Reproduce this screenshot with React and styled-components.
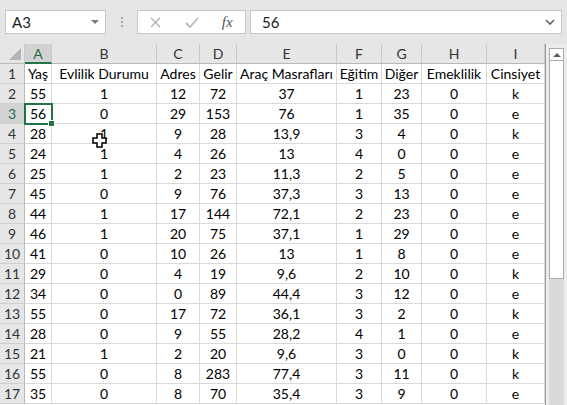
import React from "react";
import styled, { createGlobalStyle } from "styled-components";

const Global = createGlobalStyle`
  html, body { margin: 0; padding: 0; }
  body { width: 567px; height: 405px; overflow: hidden; background: #e6e6e6; font-family: "Lato", "Noto Sans", sans-serif; }
  #root { width: 567px; height: 405px; overflow: hidden; }
`;

const Page = styled.div`
  width: 567px;
  height: 405px;
  display: flex;
  flex-direction: column;
  overflow: hidden;
  background: #e6e6e6;
`;

const FormulaBar = styled.div`
  height: 44px;
  flex: none;
  display: flex;
  align-items: flex-start;
  padding: 10px 5px 0 5px;
  box-sizing: border-box;
`;

const Box = styled.div`
  height: 24px;
  box-sizing: border-box;
  background: #fff;
  border: 1px solid #c6c6c6;
  display: flex;
  align-items: center;
  width: ${(p) => p.$w}px;
  flex: ${(p) => (p.$grow ? 1 : "none")};
  margin-left: ${(p) => p.$ml || 0}px;
  padding: 0 ${(p) => p.$pr || 0}px 0 ${(p) => p.$pl || 0}px;
  font-size: 15px;
  color: #222;
`;

const BoxText = styled.span`
  flex: 1;
`;

const DropTri = styled.span`
  width: 0;
  height: 0;
  border-left: 4px solid transparent;
  border-right: 4px solid transparent;
  border-top: 4px solid #7a7a7a;
`;

const Dots = styled.div`
  width: 31px;
  flex: none;
  height: 24px;
  display: flex;
  flex-direction: column;
  align-items: center;
  justify-content: center;
  gap: 2px;
`;

const Dot = styled.span`
  width: 2px;
  height: 2px;
  background: #a8a8a8;
`;

const FxIcon = styled.span`
  width: 36px;
  display: flex;
  justify-content: center;
  align-items: center;
  color: ${(p) => p.$c};
  font-family: "Liberation Serif", serif;
  font-style: italic;
  font-size: 15px;
`;

const Main = styled.div`
  flex: 1;
  display: flex;
  min-height: 0;
`;

const Grid = styled.div`
  display: grid;
  grid-template-columns: 25px 27px 105px 43px 37px 100px 45px 40px 65px 58px;
  grid-auto-rows: 20px;
  background: #fff;
  align-content: start;
  border-right: 1px solid #9c9c9c;
  width: 546px;
  box-sizing: border-box;
  height: 100%;
`;

const Corner = styled.div`
  background: #e6e6e6;
  border-right: 1px solid #c8c8c8;
  border-bottom: 1px solid #b8b8b8;
  box-sizing: border-box;
  display: flex;
  align-items: flex-end;
  justify-content: flex-end;
  padding: 0 3px 3px 0;
`;

const CornerTri = styled.span`
  width: 0;
  height: 0;
  border-left: 12px solid transparent;
  border-bottom: 12px solid #b4b4b4;
`;

const ColHead = styled.div`
  background: ${(p) => (p.$sel ? "#d2d2d2" : "#e6e6e6")};
  color: ${(p) => (p.$sel ? "#1e6b41" : "#333")};
  border-right: 1px solid #c8c8c8;
  border-bottom: ${(p) => (p.$sel ? "2px solid #217346" : "1px solid #b8b8b8")};
  box-sizing: border-box;
  display: flex;
  align-items: center;
  justify-content: center;
  font-size: 14px;
`;

const RowHead = styled.div`
  background: ${(p) => (p.$sel ? "#d2d2d2" : "#e6e6e6")};
  color: ${(p) => (p.$sel ? "#1e6b41" : "#333")};
  border-right: 1px solid #b8b8b8;
  border-bottom: 1px solid #cfcfcf;
  box-sizing: border-box;
  display: flex;
  align-items: center;
  justify-content: center;
  font-size: 14px;
`;

const Cell = styled.div`
  position: relative;
  border-right: 1px solid #d9d9d9;
  border-bottom: 1px solid #d9d9d9;
  box-sizing: border-box;
  display: flex;
  align-items: center;
  justify-content: center;
  font-size: 14px;
  color: #000;
  white-space: nowrap;
  ${(p) =>
    p.$sel &&
    `
    outline: 2px solid #217346;
    outline-offset: -1px;
    z-index: 2;
    &::after {
      content: "";
      position: absolute;
      right: -4px;
      bottom: -4px;
      width: 5px;
      height: 5px;
      background: #217346;
      border: 1px solid #fff;
    }
  `}
`;

const Scroll = styled.div`
  width: 21px;
  flex: none;
  display: flex;
  flex-direction: column;
  padding: 4px 3px 0 3px;
  box-sizing: border-box;
  background: #ececec;
`;

const Track = styled.div`
  width: 15px;
  flex: 1;
  display: flex;
  flex-direction: column;
  background: #dadada;
`;

const UpBtn = styled.div`
  height: 13px;
  box-sizing: border-box;
  background: #fff;
  border: 1px solid #ababab;
  display: flex;
  align-items: center;
  justify-content: center;
`;

const UpTri = styled.span`
  width: 0;
  height: 0;
  border-left: 4px solid transparent;
  border-right: 4px solid transparent;
  border-bottom: 4px solid #606060;
`;

const Thumb = styled.div`
  height: 218px;
  box-sizing: border-box;
  background: #fff;
  border: 1px solid #ababab;
  border-top: none;
`;

const Cursor = styled.svg`
  position: absolute;
  left: 92px;
  top: 133px;
  z-index: 5;
`;

const cols = ["A", "B", "C", "D", "E", "F", "G", "H", "I"];
const rows = [
  ["Yaş", "Evlilik Durumu", "Adres", "Gelir", "Araç Masrafları", "Eğitim", "Diğer", "Emeklilik", "Cinsiyet"],
  ["55", "1", "12", "72", "37", "1", "23", "0", "k"],
  ["56", "0", "29", "153", "76", "1", "35", "0", "e"],
  ["28", "1", "9", "28", "13,9", "3", "4", "0", "k"],
  ["24", "1", "4", "26", "13", "4", "0", "0", "e"],
  ["25", "1", "2", "23", "11,3", "2", "5", "0", "e"],
  ["45", "0", "9", "76", "37,3", "3", "13", "0", "e"],
  ["44", "1", "17", "144", "72,1", "2", "23", "0", "e"],
  ["46", "1", "20", "75", "37,1", "1", "29", "0", "e"],
  ["41", "0", "10", "26", "13", "1", "8", "0", "e"],
  ["29", "0", "4", "19", "9,6", "2", "10", "0", "k"],
  ["34", "0", "0", "89", "44,4", "3", "12", "0", "e"],
  ["55", "0", "17", "72", "36,1", "3", "2", "0", "k"],
  ["28", "0", "9", "55", "28,2", "4", "1", "0", "e"],
  ["21", "1", "2", "20", "9,6", "3", "0", "0", "k"],
  ["55", "0", "8", "283", "77,4", "3", "11", "0", "k"],
  ["35", "0", "8", "70", "35,4", "3", "9", "0", "e"],
];

export default function App() {
  return (
    <Page>
      <Global />
      <FormulaBar>
        <Box $w={101} $pl={6} $pr={6}>
          <BoxText>A3</BoxText>
          <DropTri />
        </Box>
        <Dots>
          <Dot />
          <Dot />
          <Dot />
        </Dots>
        <Box $w={109} $pl={0}>
          <FxIcon $c="#b0b0b0">
            <svg width="11" height="11" viewBox="0 0 11 11">
              <path d="M1 1L10 10M10 1L1 10" stroke="#b0b0b0" strokeWidth="1.3" fill="none" />
            </svg>
          </FxIcon>
          <FxIcon $c="#b0b0b0">
            <svg width="14" height="11" viewBox="0 0 14 11">
              <path d="M1 6L5 10L13 1" stroke="#b8b8b8" strokeWidth="1.8" fill="none" />
            </svg>
          </FxIcon>
          <FxIcon $c="#555">fx</FxIcon>
        </Box>
        <Box $grow $ml={4} $pl={11} $pr={6}>
          <BoxText>56</BoxText>
          <svg width="10" height="7" viewBox="0 0 10 7">
            <path d="M1 1L5 5L9 1" stroke="#666" strokeWidth="1.6" fill="none" />
          </svg>
        </Box>
      </FormulaBar>
      <Main>
        <Grid>
          <Corner>
            <CornerTri />
          </Corner>
          {cols.map((c) => (
            <ColHead key={c} $sel={c === "A"}>
              {c}
            </ColHead>
          ))}
          {rows.map((r, i) => (
            <React.Fragment key={i}>
              <RowHead $sel={i === 2}>{i + 1}</RowHead>
              {r.map((v, j) => (
                <Cell key={j} $sel={i === 2 && j === 0}>
                  {v}
                </Cell>
              ))}
            </React.Fragment>
          ))}
        </Grid>
        <Scroll>
          <Track>
            <UpBtn>
              <UpTri />
            </UpBtn>
            <Thumb />
          </Track>
        </Scroll>
      </Main>
      <Cursor width="15" height="15" viewBox="0 0 15 15">
        <path
          d="M5 1H10V5H14V10H10V14H5V10H1V5H5Z"
          fill="#fff"
          stroke="#000"
          strokeWidth="1.5"
        />
      </Cursor>
    </Page>
  );
}
